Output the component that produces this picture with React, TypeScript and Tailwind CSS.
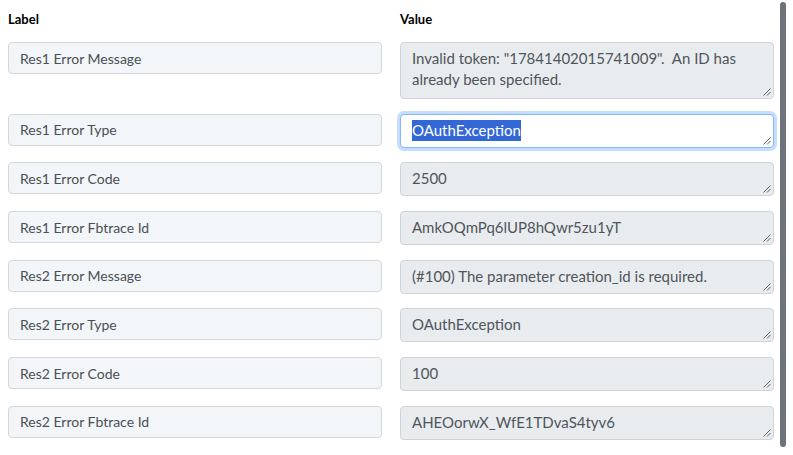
import React from "react";

type Row = { label: string; value: string; height?: number; selected?: boolean };

const rows: Row[] = [
  { label: "Res1 Error Message", value: 'Invalid token: "17841402015741009".  An ID has already been specified.', height: 57 },
  { label: "Res1 Error Type", value: "OAuthException", selected: true },
  { label: "Res1 Error Code", value: "2500" },
  { label: "Res1 Error Fbtrace Id", value: "AmkOQmPq6lUP8hQwr5zu1yT" },
  { label: "Res2 Error Message", value: "(#100) The parameter creation_id is required." },
  { label: "Res2 Error Type", value: "OAuthException" },
  { label: "Res2 Error Code", value: "100" },
  { label: "Res2 Error Fbtrace Id", value: "AHEOorwX_WfE1TDvaS4tyv6" },
];

const font = { fontFamily: "Lato, 'Open Sans', sans-serif" };

function Grip() {
  return (
    <svg className="absolute bottom-[2px] right-[2px]" width="9" height="9" viewBox="0 0 9 9">
      <path d="M8.5 1.5 L1.5 8.5 M8.5 5 L5 8.5" stroke="#5f6368" strokeWidth="1" fill="none" />
    </svg>
  );
}

export default function App() {
  return (
    <div className="flex w-[793px] h-[455px] bg-white overflow-hidden" style={font}>
      <div className="flex-1 pl-2 pr-[6px] pt-[9px]">
        <div className="grid grid-cols-2 gap-x-[18px] mb-[13px]">
          <div className="text-[13px] font-bold text-black leading-[20px]">Label</div>
          <div className="text-[13px] font-bold text-black leading-[20px]">Value</div>
        </div>
        <div className="flex flex-col gap-y-[14.7px]">
          {rows.map((r) => (
            <div key={r.label} className="grid grid-cols-2 gap-x-[18px] items-start">
              <div className="h-[32px] flex items-center px-[11px] rounded border border-[#d3d8de] bg-[#f3f6f9] text-[14px] text-[#4a4f55]">
                {r.label}
              </div>
              {r.selected ? (
                <div className="relative h-[34px] rounded border border-[#86b7fe] bg-white ring-[3px] ring-[#c6defd] px-[11px] pt-[5px] text-[15px] leading-[21px] text-[#495057]">
                  <span className="inline-block bg-[#3367d6] text-white leading-[21px]">{r.value}</span>
                  <Grip />
                </div>
              ) : (
                <div
                  className="relative rounded border border-[#ced4da] bg-[#e9ecef] pl-[11px] pr-[14px] pt-[5px] text-[15px] leading-[21px] text-[#50555b] whitespace-pre-wrap overflow-hidden"
                  style={{ height: r.height ?? 34 }}
                >
                  {r.value}
                  <Grip />
                </div>
              )}
            </div>
          ))}
        </div>
      </div>
      <div className="w-[13px] flex justify-start pt-[2px] pb-[8px]">
        <div className="w-[6px] h-full rounded-full bg-[#6c737b]" />
      </div>
    </div>
  );
}
